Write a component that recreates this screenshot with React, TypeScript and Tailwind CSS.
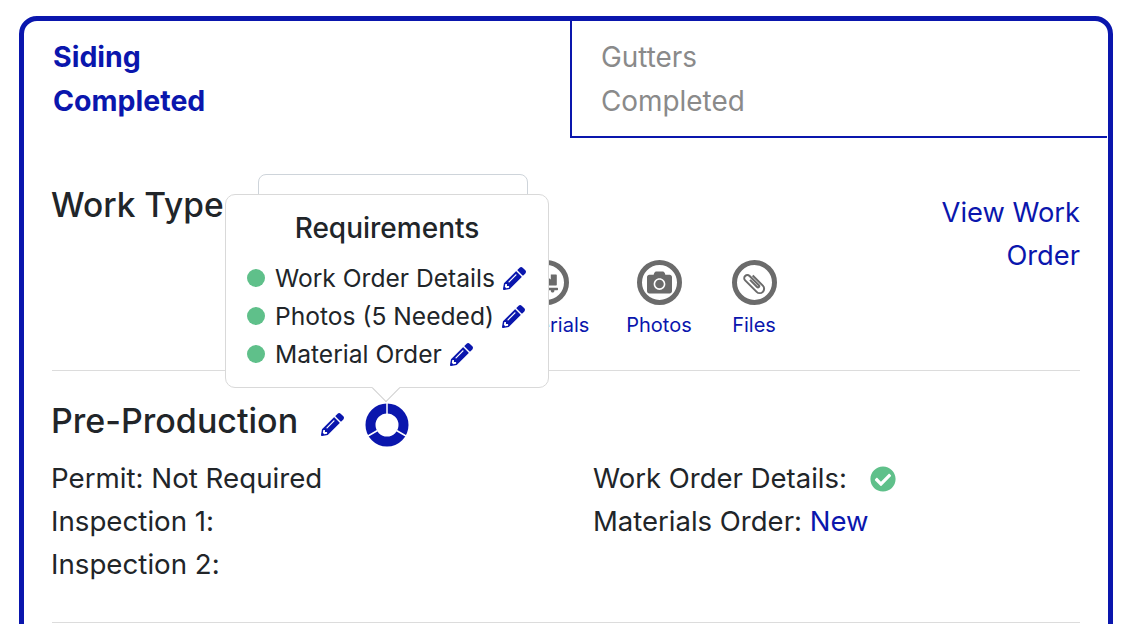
import { FaCamera, FaCheckCircle, FaDollyFlatbed, FaPencilAlt } from "react-icons/fa";

const blue = "text-[#0a16ad]";

const Pencil = ({ className = "" }: { className?: string }) => (
  <FaPencilAlt className={`${blue} text-[23px] ${className}`} />
);

const Clip = () => (
  <svg width="30" height="30" viewBox="0 0 24 24" fill="none" stroke="currentColor" strokeWidth="1.6" className="shrink-0 -rotate-45">
    <path d="M15.5 7V18.5a3.5 3.5 0 0 1-7 0V5.5a2.5 2.5 0 0 1 5 0V16a1 1 0 0 1-2 0V8" />
  </svg>
);

const IconLink = ({ label, icon, className = "" }: { label: string; icon: React.ReactNode; className?: string }) => (
  <div className={`flex flex-col items-center ${className}`}>
    <div className="flex size-[45px] items-center justify-center rounded-full border-[5px] border-[#6b6b6b] bg-white text-[#6b6b6b]">
      {icon}
    </div>
    <span className={`mt-[8px] text-[20px] leading-[24px] ${blue}`}>{label}</span>
  </div>
);

const Requirement = ({ label }: { label: string }) => (
  <div className="flex h-[38px] items-center whitespace-nowrap">
    <span className="mr-[10px] size-[18px] rounded-full bg-[#5fc08a]" />
    <span className="mr-[8px] text-[24.6px] leading-[38px]">{label}</span>
    <Pencil />
  </div>
);

const Donut = () => (
  <svg width="44" height="44" viewBox="0 0 44 44" className="ml-[21px] mt-[8px]">
    <circle cx="22" cy="22" r="16.5" fill="none" stroke="#0a16ad" strokeWidth="10" />
    <path d="M22 0V11M3 33L12.5 27.5M41 33L31.5 27.5" stroke="#fff" strokeWidth="1.5" fill="none" />
  </svg>
);

export default function App() {
  return (
    <div className="h-[624px] overflow-hidden bg-white pl-[19px] pr-[21px] pt-[16px] font-['Inter',sans-serif] text-[#212529]">
      <div className="h-[700px] rounded-[18px] border-[5px] border-[#0a16ad]">
        <div className="flex h-[117px]">
          <div className={`w-[546px] pl-[29px] pt-[14px] text-[28.5px] font-bold leading-[44px] ${blue}`}>
            <div>Siding</div>
            <div>Completed</div>
          </div>
          <div className="mr-[1px] flex-1 border-b-2 border-l-2 border-[#0a16ad] pl-[29px] pt-[14px] text-[27.9px] leading-[44px] text-[#8a8a8a]">
            <div>Gutters</div>
            <div>Completed</div>
          </div>
        </div>

        <div className="px-[28px]">
          <div className="relative flex h-[233px] border-b border-[#dcdcdc]">
            <div className="-ml-[1px] w-[177px] pt-[43px] text-[33.5px] font-medium leading-[48px]">Work Type</div>
            <div className="ml-[30px] flex-1">
              <div className="mt-[36px] h-[60px] w-[270px] rounded-[8px] border border-[#ced4da]" />
              <div className="ml-[243px] mt-[26px] flex">
                <IconLink
                  label="Materials"
                  className="w-[90px]"
                  icon={<FaDollyFlatbed className="text-[24px]" />}
                />
                <IconLink label="Photos" className="ml-[33px] w-[70px]" icon={<FaCamera className="text-[25px]" />} />
                <IconLink label="Files" className="ml-[35px] w-[50px]" icon={<Clip />} />
              </div>
            </div>
            <div className={`w-[150px] pt-[53px] text-right text-[27.3px] leading-[43px] ${blue}`}>View Work Order</div>

            <div className="absolute left-[173px] top-[56px] w-[324px] rounded-[10px] border border-[#d9d9d9] bg-white px-[21px] pb-[14px] pt-[13px] text-[#212529]">
              <div className="mb-[11px] text-center text-[28px] font-medium leading-[40px]">Requirements</div>
              <Requirement label="Work Order Details" />
              <Requirement label="Photos (5 Needed)" />
              <Requirement label="Material Order" />
              <div className="absolute -bottom-[11px] left-[150px] size-[20px] rotate-45 border-b border-r border-[#d0d0d0] bg-white" />
            </div>
          </div>

          <div className="-ml-[1px] flex items-center pt-[23px]">
            <h2 className="text-[34px] font-medium leading-[54px]">Pre-Production</h2>
            <Pencil className="ml-[23px] mt-[6px]" />
            <Donut />
          </div>

          <div className="grid h-[175px] grid-cols-2 border-b border-[#dcdcdc] pt-[9px] text-[27.5px] leading-[43px]">
            <div className="-ml-[1px] text-[27.7px] [font-feature-settings:'calt'_0]">
              <div>Permit: Not Required</div>
              <div>Inspection 1:</div>
              <div>Inspection 2:</div>
            </div>
            <div className="ml-[27px]">
              <div className="flex items-center">
                Work Order Details:
                <FaCheckCircle className="ml-[23px] text-[26px] text-[#5fc08a]" />
              </div>
              <div>
                Materials Order: <span className={blue}>New</span>
              </div>
            </div>
          </div>
        </div>
      </div>
    </div>
  );
}
